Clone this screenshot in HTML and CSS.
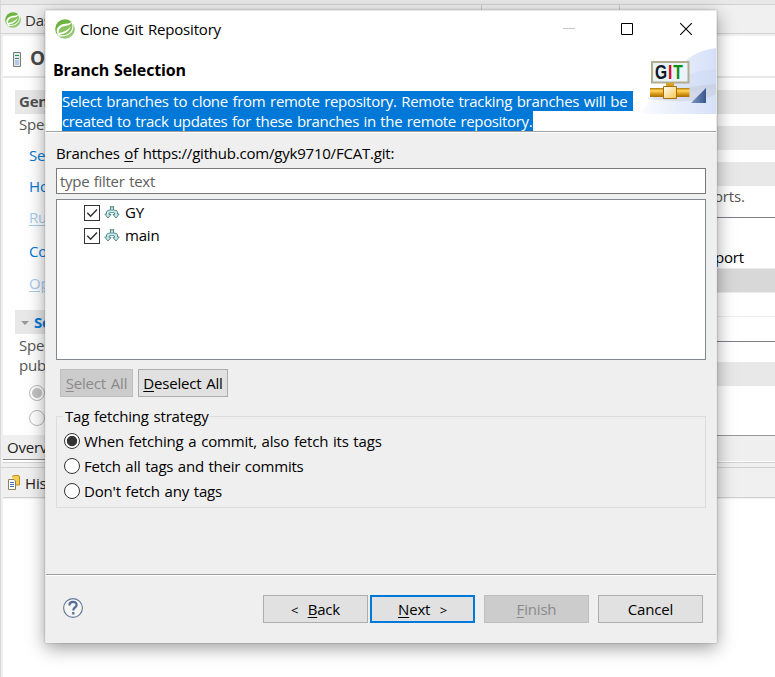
FILE: index.html
```html
<!DOCTYPE html>
<html lang="en">
<head>
<meta charset="utf-8">
<title>Clone Git Repository</title>
<link rel="stylesheet" href="styles.css">
</head>
<body>
<svg class="defs" width="0" height="0">
  <defs>
    <linearGradient id="green" x1=".2" y1="0" x2=".8" y2="1"><stop offset=".35" stop-color="#6db33f"/><stop offset="1" stop-color="#a5d08a"/></linearGradient>
    <symbol id="leaf" viewBox="0 0 20 20">
      <circle cx="10" cy="10" r="9.800" fill="url(#green)"/>
      <path d="M17.600 1.200C16.400 3.600 14.500 4.400 10.500 4.800C5.200 5.400 1.600 8.300 1.700 12.300C1.800 14.500 2.800 16.300 4.200 17.400C8.900 18 14.800 16.400 17.200 12.300C18.900 9.300 19 5.200 17.600 1.200Z" fill="#fff"/>
      <path d="M16.800 3.600C15.200 6 13 6.500 10.200 6.900C6.200 7.500 3.500 9.600 3.600 13.900C8.500 13.300 12.600 11.600 15.800 7.600C14.600 12 10 15 4.300 15.900C9 17.200 14.200 15.400 16.400 11.600C17.600 9.200 17.700 6.300 16.800 3.600Z" fill="#87c25f"/>
    </symbol>
    <symbol id="branch" viewBox="0 0 16 15">
      <path d="M6.500 1V5L3.500 5.500L2.500 7V9H.8L4 13L7 9.500H5.200V8L7.500 7.500H8.500L10.500 8V9.500H9L12 13L15.200 9H13.500V7L12.500 5.500L9.500 5V1" fill="#c4e8e7" stroke="#568b8f" stroke-width="1"/>
      <path d="M8 1V6" stroke="#5f9296" stroke-dasharray="2 1"/>
    </symbol>
    <linearGradient id="gold" x2="0" y2="1">
      <stop offset="0" stop-color="#b57a08"/><stop offset=".3" stop-color="#ffd65c"/>
      <stop offset=".65" stop-color="#d89a15"/><stop offset="1" stop-color="#a96c00"/>
    </linearGradient>
    <linearGradient id="cube" x2="1" y2="1"><stop stop-color="#fff"/><stop offset="1" stop-color="#f5c64a"/></linearGradient>
    <linearGradient id="sky" x2="1" y2="0"><stop stop-color="#fafbff"/><stop offset="1" stop-color="#d5e0f8"/></linearGradient>
    <linearGradient id="navy" x2="1" y2="0"><stop stop-color="#8197bf"/><stop offset="1" stop-color="#35588f"/></linearGradient>
  </defs>
</svg>

<div class="workbench">
  <div class="toolbar-edge"></div>
  <div class="tabs">
    <svg class="tab-icon" width="16" height="16"><use href="#leaf"/></svg><span>Das</span>
    <i class="tab-divider"></i><i class="tab-divider second"></i>
  </div>
  <div class="editor">
    <div class="left-pane">
      <div class="form-title">
        <svg width="8" height="15" viewBox="0 0 8 15"><path d="M.5.500H7.500V14.500H.5Z" fill="#e1e9ef" stroke="#71806f"/><path d="M2 3.500H6M2 6.500H6" stroke="#487c58"/><path d="M2 8H6V13H2Z" fill="#b8c7ea"/><path d="M3 3H5V4H3Z" fill="#13a044"/></svg>
        <span>Ov</span>
      </div>
      <div class="section-head general">Gen</div>
      <div class="hint">Spec</div>
      <div class="link">Se</div>
      <div class="link">Ho</div>
      <div class="link off">Ru</div>
      <div class="link gap">Co</div>
      <div class="link off">Op</div>
      <div class="section-head publish"><i class="twisty"></i>Se</div>
      <div class="hint two">Spec<br>pub</div>
      <div class="faint-radio on"></div>
      <div class="faint-radio"></div>
      <div class="bottom-tab">Overv</div>
    </div>
    <div class="right-pane">
      <div class="band title-band"></div>
      <div class="band"></div>
      <div class="band"></div>
      <div class="band last"></div>
      <div class="caption">orts.</div>
      <div class="report"><div class="report-head">port</div><div class="report-row"></div><div class="report-line"></div></div>
      <div class="band timeouts"></div>
      <div class="status-strip"></div>
    </div>
  </div>
  <div class="history">
    <div class="history-tab">
      <svg width="12" height="15" viewBox="0 0 12 15"><path d="M4 1.500Q5 .5 7 .5H10Q11.500.5 11.500 2V10H7" fill="#f5cd50" stroke="#bc8d20"/><path d="M.5 4.500H6L7.500 6V14.500H.5Z" fill="#fff" stroke="#8b8356"/><path d="M2 7.500H6M2 9.500H6M2 11.500H6" stroke="#4572b8"/></svg>
      <span>His</span>
    </div>
  </div>
</div>

<div class="dialog">
  <div class="titlebar">
    <svg width="20" height="20"><use href="#leaf"/></svg>
    <span class="caption-text">Clone Git Repository</span>
    <svg class="controls" width="132" height="14" viewBox="0 0 132 14" fill="none">
      <path d="M0 6.500H12" stroke="#c8c8c8"/><path d="M58.500 1.500H69.500V12.500H58.500Z" stroke="#000" stroke-width="1"/><path d="M117.200 1.200L128.800 12.800M128.800 1.200L117.200 12.800" stroke="#000" stroke-width="1.100"/>
    </svg>
  </div>
  <div class="banner">
    <div class="banner-text">
      <h1>Branch Selection</h1>
      <p><span class="sel one">Select branches to clone from remote repository. Remote tracking branches will be </span><br><span class="sel two">created to track updates for these branches in the remote repository.</span></p>
    </div>
    <svg class="git" width="75" height="66" viewBox="0 0 75 66">
      <path d="M1 66C5 50 24 46 32 30C40 12 56 2 75 0V66Z" fill="url(#sky)"/>
      <path d="M28 38C42 28 54 22 75 21V39C53 45 38 44 20 50Z" fill="#c5d3f2" opacity=".35"/>
      <path d="M6 51C30 43 48 38 75 36V46C60 55 35 54 6 51Z" fill="#bfc4ce" opacity=".4"/>
      <path d="M11 14H47.500V34.500H11Z" fill="#eaf3fa" stroke="#b3ad90" stroke-width="2"/>
      <text class="git-word" transform="translate(14 31) scale(.78 1)" fill="#101820">G<tspan fill="#cf0a1c">I</tspan><tspan fill="#07900e">T</tspan></text>
      <path d="M25 35H33V39H25Z" fill="#d89f21"/>
      <path d="M9 40H48.500V49H9Z" fill="url(#gold)"/>
      <path d="M22.500 38.500H35.500V50.500H22.500Z" fill="url(#cube)" stroke="#a86c00"/>
      <path d="M50 55L65 40V55Z" fill="url(#navy)"/>
    </svg>
  </div>
  <div class="body">
    <div class="branches-label">Branches <u>o</u>f https://github.com/gyk9710/FCAT.git:</div>
    <div class="filter">type filter text</div>
    <div class="tree">
      <div class="tree-row"><span class="check"><svg width="14" height="14" viewBox="0 0 14 14"><path d="M2.300 6.800L5.600 10.200L12 3.600" fill="none" stroke="#333" stroke-width="1.500"/></svg></span><svg width="16" height="15"><use href="#branch"/></svg><span class="name">GY</span></div>
      <div class="tree-row"><span class="check"><svg width="14" height="14" viewBox="0 0 14 14"><path d="M2.300 6.800L5.600 10.200L12 3.600" fill="none" stroke="#333" stroke-width="1.500"/></svg></span><svg width="16" height="15"><use href="#branch"/></svg><span class="name">main</span></div>
    </div>
    <div class="select-buttons">
      <div class="btn disabled"><span><u>S</u>elect All</span></div>
      <div class="btn deselect"><span><u>D</u>eselect All</span></div>
    </div>
    <div class="group">
      <div class="legend">Tag fetching strategy</div>
      <div class="option"><i class="radio on"></i><span>When fetching a commit, also fetch its tags</span></div>
      <div class="option"><i class="radio"></i><span class="tight">Fetch all tags and their commits</span></div>
      <div class="option"><i class="radio"></i><span>Don't fetch any tags</span></div>
    </div>
  </div>
  <div class="footer">
    <svg class="help" width="22" height="22" viewBox="0 0 22 22"><circle cx="11" cy="11" r="9.400" fill="#f5f5f6" stroke="#687b9a" stroke-width="1.200"/><path d="M7.400 8.400C7.400 3.600 14.800 3.700 14.600 8.100C14.500 10.500 11.300 10.500 11.300 13.400M11.300 15.100V17.500" fill="none" stroke="#546b93" stroke-width="2.200"/></svg>
    <div class="btn"><span><small>&lt;</small>&nbsp; <u>B</u>ack</span></div>
    <div class="btn default"><span><u>N</u>ext &nbsp;<small>&gt;</small></span></div>
    <div class="btn disabled finish"><span><u>F</u>inish</span></div>
    <div class="btn cancel"><span>Cancel</span></div>
  </div>
</div>
</body>
</html>
```
FILE: styles.css
```css
* { box-sizing: border-box; }
body {
  margin: 0; width: 775px; height: 677px; overflow: hidden; position: relative;
  background: #fff; color: #000;
  font: 15px/20px "Open Sans", "Noto Sans", sans-serif;
  letter-spacing: -.18px; word-spacing: 1px; white-space: nowrap;
}
.defs { position: absolute; }
svg { display: block; flex: none; }
u { text-decoration: underline 1px; text-underline-offset: 2px; }
small { font-size: 13px; line-height: 1; }

/* Workbench behind the dialog */
.workbench { height: 677px; background: #f0f0f0; border-left: 1px solid #d8d8d8; }
.toolbar-edge { height: 4px; background: #e8e8e8; }
.tabs { height: 30px; display: flex; align-items: center; padding-left: 4px; border: solid #d2d2d2; border-width: 1px 0; color: #333; }
.tab-icon { margin-top: 2px; }
.tabs span { margin: 2px 0 0 4px; width: 80px; }
.tab-divider { width: 1px; height: 28px; background: #ccc; margin-left: 376px; }
.tab-divider.second { margin-left: 137px; }
.editor { height: 429px; display: flex; margin-left: 2px; padding-top: 2px; border-bottom: 1px solid #d2d2d2; }
.left-pane { width: 343px; background: #fff; }
.right-pane { flex: 1; background: #fff; }
.form-title { height: 42px; display: flex; align-items: center; padding: 6px 0 0 10px; border-bottom: 2px solid #e8e8e8; font: 700 19px/24px "Open Sans", sans-serif; color: #4a4a4a; }
.form-title span { margin: -3px 0 0 9px; }
.section-head { height: 24px; margin-left: 12px; padding-left: 4px; background: #e8e8e8; font-weight: 700; line-height: 23px; color: #505050; }
.section-head.general { margin-top: 12px; }
.section-head.publish { display: flex; align-items: center; margin-top: 17px; color: #0078d7; }
.twisty { border: 4px solid transparent; border-top-color: #999; border-bottom: 0; margin: 2px 5px 0 2px; }
.hint { padding: 0 0 0 16px; height: 26px; color: #555; }
.hint.two { height: 45px; padding-top: 1px; }
.link { margin: 0 0 11px 26px; color: #0078d7; }
.hint + .link { margin-top: 5px; }
.link.gap { margin: 14px 0 12px 26px; }
.link.off { color: #a6cdf0; text-decoration: underline; text-underline-offset: 2px; }
.faint-radio { width: 16px; height: 16px; margin: 3px 0 9px 26px; border: 1px solid #bbb; border-radius: 50%; }
.faint-radio.on { background: radial-gradient(circle, #c4c4c4 4.500px, #fff 5.500px); margin-top: 6px; }
.bottom-tab { height: 25px; margin-top: 9px; padding: 2px 4px; background: #efefef; border-bottom: 1px solid #888; color: #222; }

.band { height: 24px; margin-bottom: 12px; background: #e8e8e8; }
.title-band { height: 42px; background: #fff; border-bottom: 2px solid #e8e8e8; }
.band.last { margin-bottom: 0; }
.caption { padding-left: 368px; height: 31px; color: #555; }
.report { height: 125px; border: solid #7f7f88; border-width: 1px 0; padding-top: 29px; margin-bottom: 20px; }
.report-head { height: 21px; padding-left: 369px; }
.report-row { height: 25px; background: #d8d8d8; border: solid #ececec; border-width: 1px 0; }
.report-line { height: 24px; border-bottom: 1px solid #ededed; }
.band.timeouts { margin-bottom: 49px; }
.status-strip { height: 26px; background: #efefef; border-top: 1px solid #999; }
.history { height: 210px; margin: 4px 0 0 0; border-top: 1px solid #d2d2d2; padding-left: 2px; }
.history-tab { height: 30px; display: flex; align-items: center; padding-left: 5px; border-bottom: 1px solid #d2d2d2; color: #222; }
.history-tab span { margin: 1px 0 0 5px; }
.history::after { content: ""; display: block; height: 180px; margin-top: 1px; background: #fff; }

/* Dialog window */
.dialog {
  position: absolute; left: 45px; top: 10px; width: 672px; height: 633px;
  background: #efefef; border: 1px solid #e8e8e8; border-bottom: 0;
  box-shadow: 0 5px 17px rgba(0,0,0,.38), 0 0 2px rgba(0,0,0,.25);
}
.titlebar { height: 38px; display: flex; align-items: center; padding: 0 0 2px 9px; background: #fff; }
.caption-text { margin-left: 5px; }
.controls { margin-left: auto; margin-right: 21px; }
.banner { height: 83px; display: flex; justify-content: space-between; background: #fff; border-bottom: 1px solid #a0a0a0; }
.banner h1 { margin: 11px 0 0 7px; font-size: 16px; line-height: 20px; font-weight: 700; letter-spacing: -.14px; }
.banner p { margin: 11px 0 0 16px; color: #fff; }
.sel { display: inline-block; height: 20px; background: #0078d7; white-space: pre; vertical-align: top; }
.sel.one { width: 571px; letter-spacing: -.29px; }
.sel.two { width: 471px; letter-spacing: -.35px; }
.git { margin-top: -1px; margin-left: -10px; }
.git-word { font: 700 20px "Liberation Sans", sans-serif; letter-spacing: 1.2px; }
.body { height: 443px; padding: 10px 10px 0; border-top: 1px solid #fff; border-bottom: 1px solid #a0a0a0; }
.branches-label { height: 25px; letter-spacing: -.21px; }
.filter { height: 26px; padding: 2px 3px; background: #fff; border: 1px solid #7a7a7a; color: #606060; letter-spacing: -.3px; }
.tree { height: 161px; margin-top: 5px; padding: 1px 0 0 27px; background: #fff; border: 1px solid #828790; }
.tree-row { height: 23px; display: flex; align-items: center; }
.name { margin: -2px 0 0 5px; }
.check { width: 16px; height: 16px; margin-right: 4px; border: 1px solid #333; background: #fff; }
.select-buttons { display: flex; gap: 5px; margin: 9px 0 0 4px; }
.btn { width: 105px; height: 28px; flex: none; display: flex; align-items: center; justify-content: center; background: #e1e1e1; border: 1px solid #adadad; }
.btn.disabled { background: #ccc; border-color: #bfbfbf; color: #8a8a8a; }
.select-buttons .btn { width: 73px; }
.select-buttons .deselect { width: 90px; }
.btn.default { border: 2px solid #0078d7; }
.group { height: 92px; margin-top: 19px; padding-left: 7px; border: 1px solid #dcdcdc; }
.legend { width: 147px; height: 20px; margin: -11px 0 3px -1px; padding-left: 2px; background: #efefef; }
.option { height: 25px; display: flex; align-items: center; }
.option span { margin-top: -2px; }
.tight { letter-spacing: -.24px; }
.radio { width: 16px; height: 16px; margin: -2px 4px 0 0; border: 1px solid #333; border-radius: 50%; background: #fff; }
.radio.on { background: radial-gradient(circle, #333 4.700px, #fff 5.600px); }
.footer { height: 68px; display: flex; align-items: center; padding: 0 13px 2px 16px; border-top: 1px solid #fff; }
.help { margin-right: 179px; margin-top: -1px; }
.footer .default { margin-left: 2px; }
.footer .finish, .footer .cancel { margin-left: 9px; }
```
